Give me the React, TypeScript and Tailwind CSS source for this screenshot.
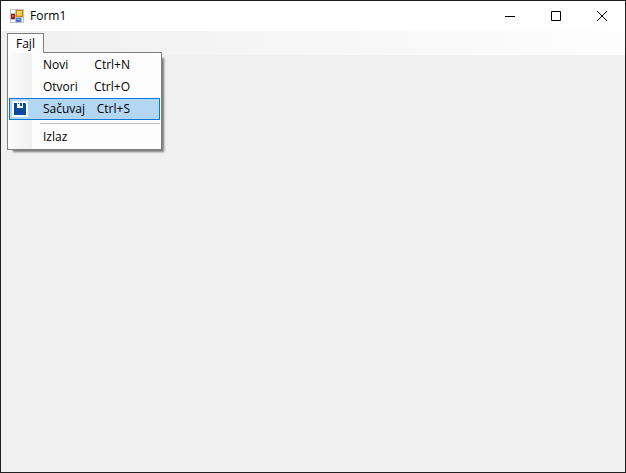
import { useState } from "react";
import clsx from "clsx";

interface MenuEntry {
  readonly label: string;
  readonly shortcut?: string;
  readonly icon?: boolean;
  readonly separatorBefore?: boolean;
}

const entries: MenuEntry[] = [
  { label: "Novi", shortcut: "Ctrl+N" },
  { label: "Otvori", shortcut: "Ctrl+O" },
  { label: "Sačuvaj", shortcut: "Ctrl+S", icon: true },
  { label: "Izlaz", separatorBefore: true },
];

const FormIcon = () => (
  <svg width="14" height="14" viewBox="0 0 14 14" shapeRendering="crispEdges" aria-hidden="true">
    <defs>
      <linearGradient id="gold" x1="0" y1="0" x2="1" y2="1">
        <stop offset="0" stopColor="#ffe68c" />
        <stop offset="1" stopColor="#f0b010" />
      </linearGradient>
    </defs>
    <rect width="14" height="14" fill="#c0c0c0" />
    <rect x="1" y="1" width="4" height="3" fill="#fff" />
    <rect x="1" y="11" width="4" height="2" fill="#fff" />
    <rect x="12" y="9" width="1" height="4" fill="#fff" />
    <rect x="1" y="5" width="4" height="5" fill="#a01c1c" />
    <rect x="2" y="6" width="2" height="2" fill="#d9573f" />
    <rect x="6" y="1" width="7" height="7" fill="#c08a10" />
    <rect x="7" y="2" width="5" height="5" fill="url(#gold)" />
    <rect x="6" y="9" width="5" height="4" fill="#3f7be0" />
    <rect x="7" y="10" width="3" height="1" fill="#82b1f5" />
  </svg>
);

const SaveIcon = () => (
  <svg width="16" height="16" viewBox="0 0 16 16" aria-hidden="true">
    <rect width="16" height="16" fill="#f7fafd" />
    <path d="M2 2h11l1 1v11H2z" fill="#0b4a9b" />
    <path d="M5 2h6v5H5z" fill="#f7fafd" />
    <path d="M6 2h1v1H6zM8 2h2v3H8z" fill="#0b4a9b" />
  </svg>
);

const captionButtons = [
  { label: "Minimize", path: "M0 5.5h10" },
  { label: "Maximize", path: "M.5 .5h9v9h-9z" },
  { label: "Close", path: "M0 0l10 10M10 0L0 10" },
];

const TitleBar = () => (
  <header className="flex h-[30px] items-center bg-white pl-[9px]">
    <FormIcon />
    <h1 className="flex-1 pl-[6px]">Form1</h1>
    <div className="flex h-full">
      {captionButtons.map(({ label, path }) => (
        <button
          key={label}
          type="button"
          aria-label={label}
          className="flex h-full w-[46px] items-center justify-center hover:bg-[#e5e5e5]"
        >
          <svg width="10" height="10" viewBox="0 0 10 10" fill="none" stroke="#000" className="overflow-visible">
            <path d={path} />
          </svg>
        </button>
      ))}
    </div>
  </header>
);

const App = () => {
  const [open, setOpen] = useState(true);
  const [active, setActive] = useState("Sačuvaj");

  return (
    <div className="flex min-h-screen flex-col border border-[#202020] bg-[#f0f0f0] font-['Open_Sans','Noto_Sans',sans-serif] text-[12px] leading-4 text-black">
      <TitleBar />

      <nav className="h-6 bg-linear-to-r from-[#f0f0f0] to-[#fdfdfd] pt-[2px] pl-[6px]">
        <div className="relative w-fit">
          <button
            type="button"
            aria-expanded={open}
            onClick={() => setOpen(!open)}
            className={clsx(
              "relative z-10 block h-5 border border-b-0 px-2",
              open ? "border-[#808080] bg-[#fcfcfc]" : "border-transparent"
            )}
          >
            Fajl
          </button>

          {open && (
            <div
              role="menu"
              className="absolute top-[19px] left-0 w-[155px] border border-[#808080] bg-linear-to-r from-[#fcfcfc] from-0% via-[#f0f0f0] via-[24px] to-[#fdfdfd] to-[24px] px-px py-px shadow-[4px_4px_2px_-2px_#00000080]"
            >
              {entries.map(({ label, shortcut, icon, separatorBefore }) => (
                <div key={label} role="none">
                  {separatorBefore && <hr className="mt-[3px] mb-[2px] ml-[31px] border-[#bdbdbd]" />}
                  <button
                    type="button"
                    role="menuitem"
                    onMouseEnter={() => setActive(label)}
                    className={clsx(
                      "flex h-[22px] w-full items-center border pr-[29px] pl-[2px]",
                      active === label ? "border-[#0078d7] bg-[#b3d7f3]" : "border-transparent"
                    )}
                  >
                    <span className="w-[31px]">{icon && <SaveIcon />}</span>
                    <span>{label}</span>
                    <span className="flex-1 text-right">{shortcut}</span>
                  </button>
                </div>
              ))}
            </div>
          )}
        </div>
      </nav>

      <main className="flex-1" />
    </div>
  );
};

export default App;
